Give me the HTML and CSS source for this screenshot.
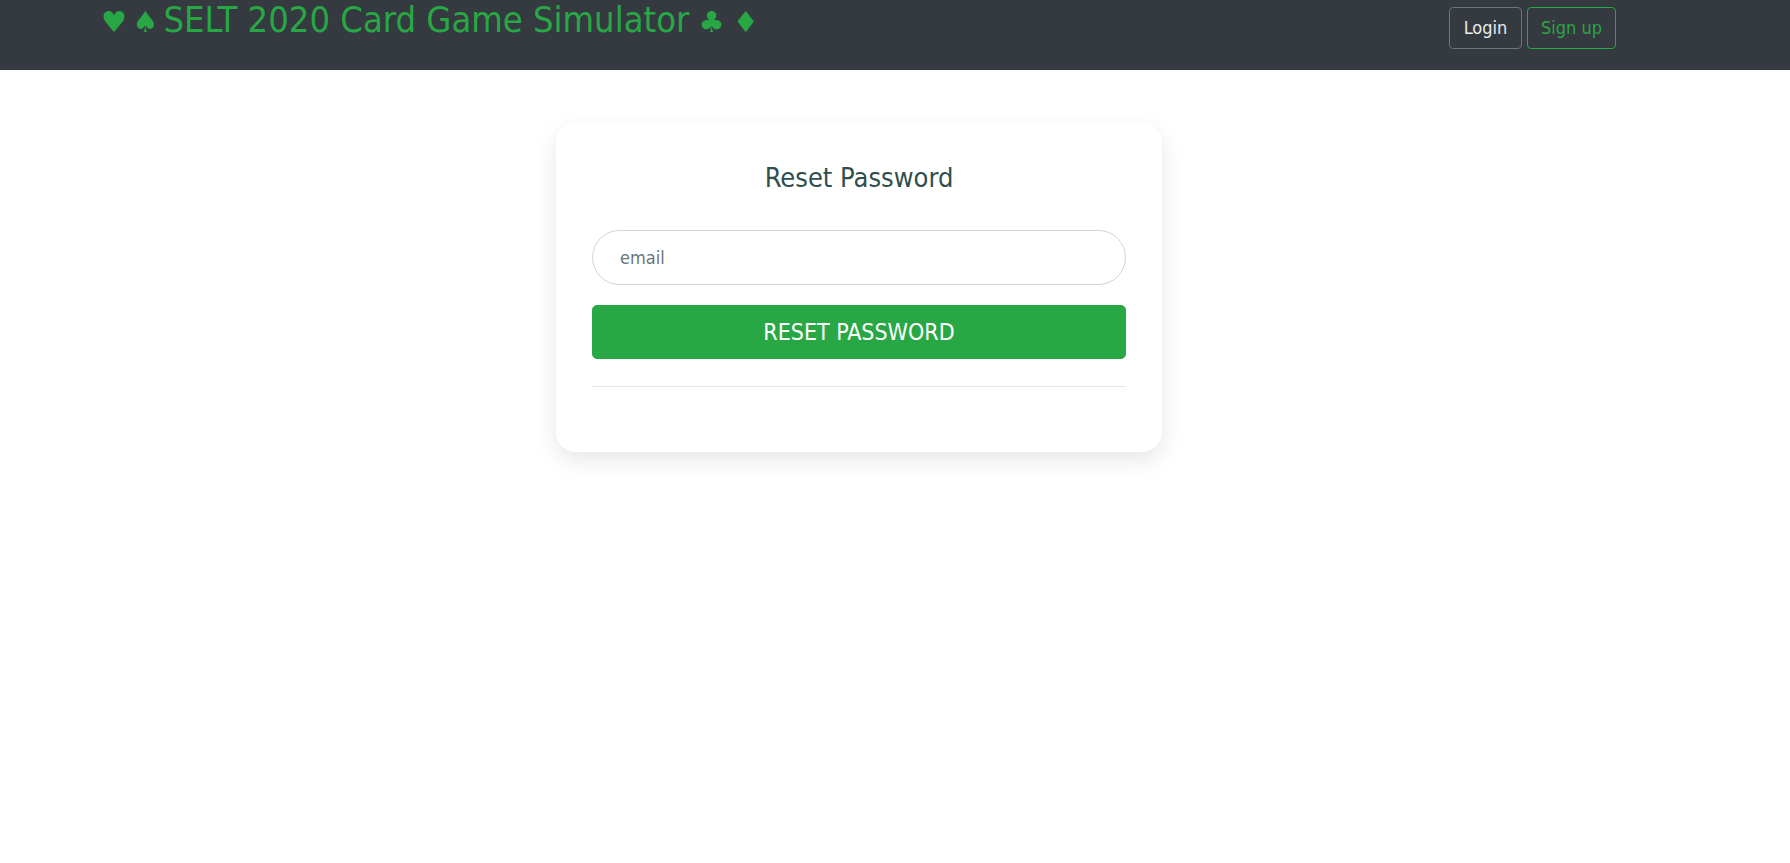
FILE: index.html
```html
<!DOCTYPE html>
<html lang="en">
<head>
<meta charset="utf-8">
<title>Reset Password</title>
<link rel="stylesheet" href="styles.css">
</head>
<body>
<nav class="navbar">
  <a class="brand" href="#"><span class="suits">♥ ♠ </span>SELT 2020 Card Game Simulator<span class="suits suits-end"> ♣ ♦</span></a>
  <div class="nav-actions">
    <a class="btn-nav btn-login" href="#">Login</a>
    <a class="btn-nav btn-signup" href="#">Sign up</a>
  </div>
</nav>
<main class="page">
  <div class="card">
    <h5 class="card-title">Reset Password</h5>
    <form class="form">
      <input class="input" type="email" placeholder="email">
      <button class="btn-reset" type="button">RESET PASSWORD</button>
      <hr class="divider">
    </form>
  </div>
</main>
</body>
</html>
```

FILE: styles.css
```css
* { box-sizing: border-box; }
html, body {
  margin: 0;
  padding: 0;
  background: #fff;
  font-family: "DejaVu Sans Condensed", "DejaVu Sans", sans-serif;
}
body { min-height: 100vh; }
.navbar {
  height: 70px;
  background: #343a40;
  display: flex;
  justify-content: space-between;
  align-items: flex-start;
  padding: 0 174px 0 101px;
}
.brand {
  color: #28a745;
  text-decoration: none;
  font-size: 36px;
  line-height: 40px;
  white-space: nowrap;
}
.suits {
  font-family: "DejaVu Sans", sans-serif;
  font-size: 29px;
  word-spacing: -4px;
}
.suits-end {
  margin-left: 1px;
  word-spacing: -1px;
}
.nav-actions {
  display: flex;
  gap: 5px;
  margin-top: 7px;
}
.btn-nav {
  display: block;
  height: 42px;
  line-height: 40px;
  font-size: 18px;
  border: 1px solid;
  border-radius: 4px;
  text-decoration: none;
  text-align: center;
}
.btn-login {
  color: #e9ecef;
  border-color: #6c757d;
  width: 73px;
}
.btn-signup {
  color: #28a745;
  border-color: #28a745;
  width: 89px;
}
.page {
  padding: 53px 0 60px 556px;
}
.card {
  width: 606px;
  background: #fff;
  border-radius: 20px;
  box-shadow: 0 8px 22px rgba(0, 0, 0, 0.1);
  padding: 39px 36px 37px;
}
.card-title {
  margin: 0 0 36px;
  font-weight: normal;
  font-size: 27px;
  line-height: 1.2;
  text-align: center;
  color: #2f4f4f;
}
.form {
  display: flex;
  flex-direction: column;
}
.input {
  height: 55px;
  border: 1px solid #ced4da;
  border-radius: 28px;
  padding: 0 27px;
  font-family: inherit;
  font-size: 18px;
  color: #495057;
  outline: none;
}
.input::placeholder { color: #6c757d; }
.btn-reset {
  margin-top: 20px;
  height: 54px;
  border: 1px solid #28a745;
  border-radius: 5px;
  background: #28a745;
  color: #fff;
  font-family: inherit;
  font-size: 23px;
  cursor: pointer;
}
.divider {
  margin: 27px 0 28px;
  border: 0;
  border-top: 1px solid #e5e5e5;
}
```
